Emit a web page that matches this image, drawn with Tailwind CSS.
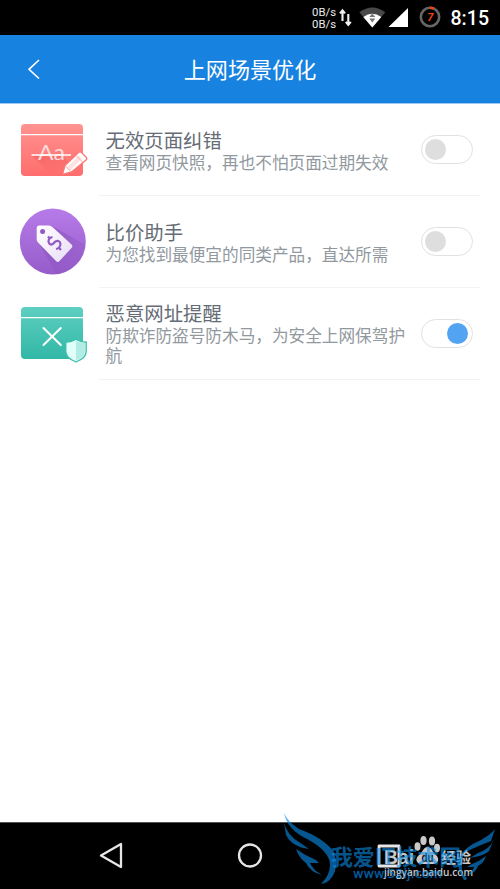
<!DOCTYPE html>
<html lang="zh-CN">
<head>
<meta charset="utf-8">
<title>上网场景优化</title>
<script src="https://cdn.jsdelivr.net/npm/@tailwindcss/browser@4"></script>
</head>
<body class="w-[500px] h-[889px] overflow-hidden bg-white font-['Noto_Sans_CJK_SC',sans-serif]">
<div class="relative flex flex-col w-[500px] h-[889px]">
  <!-- status bar -->
  <div class="h-[35px] shrink-0 bg-black">
    <svg class="block" width="500" height="35" viewBox="0 0 500 35" font-family="Roboto, sans-serif">
      <g fill="#ececec" font-size="11.5">
        <text x="312" y="15.5" textLength="24" lengthAdjust="spacingAndGlyphs">0B/s</text>
        <text x="312" y="28" textLength="24" lengthAdjust="spacingAndGlyphs">0B/s</text>
      </g>
      <path d="M342.500 21V11M340 13.400l2.500-3 2.500 3M348.300 14v10M345.800 21.800l2.500 3 2.500-3" fill="none" stroke="#f2f2f2" stroke-width="2.100"/>
      <path d="M359.300 12.300Q372.300 2.500 385.300 12.300L372.300 27.500Z" fill="#484848"/>
      <path d="M363.300 17Q372.300 10.500 381.300 17L372.300 27.500Z" fill="#fff"/>
      <path d="M372.300 13.500l3 3.500h-6zM372.300 22.500l3-4h-6z" fill="#777"/>
      <path d="M408 8v19H388.500z" fill="#fff"/>
      <circle cx="430" cy="17" r="9.200" fill="none" stroke="#666" stroke-width="2.600"/>
      <path d="M430 7.800a9.200 9.200 0 0 1 4 .9" fill="none" stroke="#f4420c" stroke-width="2.600"/>
      <text x="430.200" y="21" text-anchor="middle" font-size="11" font-weight="700" font-style="italic" fill="#f4420c">7</text>
      <text x="450.500" y="25" font-size="19.500" font-weight="500" fill="#fff" textLength="38.500" lengthAdjust="spacingAndGlyphs">8:15</text>
    </svg>
  </div>
  <!-- title bar -->
  <header class="relative h-[69px] shrink-0 bg-[#1782df] border-b border-[#9dcaf2] flex items-center justify-center text-white">
    <svg class="absolute left-[27px] top-[24px]" width="14" height="20" viewBox="0 0 14 20" fill="none" stroke="#fff" stroke-width="1.600"><path d="M12 1L2 10.300L12 19.500"/></svg>
    <h1 class="text-[22.100px] leading-[30px] pb-[3px]">上网场景优化</h1>
  </header>
  <!-- settings -->
  <main class="flex-1">
    <section class="flex h-[92px]">
      <svg class="w-[99px] h-[92px] shrink-0" viewBox="0 104 99 92">
        <defs>
          <linearGradient id="red" x2="0" y2="1"><stop stop-color="#ff9390"/><stop offset="1" stop-color="#ff6d6d"/></linearGradient>
          <linearGradient id="redShade" x1="0" y1="0" x2=".3" y2="1"><stop stop-color="#e95555" stop-opacity=".5"/><stop offset="1" stop-color="#ee5b5b" stop-opacity="0"/></linearGradient>
        </defs>
        <rect x="21" y="124" width="62" height="52" rx="4" fill="url(#red)"/>
        <path d="M32 155.500h31l10 12-9 8.500H53z" fill="url(#redShade)"/>
        <path d="M21 134.600h62" stroke="#fff" stroke-width="1.400"/>
        <text x="38" y="160" font-family="Lato, sans-serif" font-size="22" fill="#ffdad8" textLength="27" lengthAdjust="spacingAndGlyphs">Aa</text>
        <path d="M31.500 155H71" stroke="#fff" stroke-width="1.400"/>
        <path d="M62.500 174.300l2.500-8.800 13.500-13q1.500-1.500 3 0l4.500 4.500q1.500 1.500 0 3L71.500 172z" fill="#fff" stroke="#ff7575" stroke-width="1.300"/>
        <path d="M67 167.500l12-12 3 3-12 12z" fill="#ffe3e2"/>
        <path d="M65.500 166l5.500 6M76 155.500l6.500 6.500" stroke="#ff9a98" stroke-width=".9"/>
      </svg>
      <div class="flex w-[381px] border-b border-[#f2f3f3]">
        <div class="flex flex-col w-[322px] pl-[6.500px] pt-[23px]">
          <h2 class="mb-[1px] text-[19.400px] leading-[25px] text-[#656c75]">无效页面纠错</h2>
          <p class="w-[302px] text-[16.650px] leading-[19.500px] text-[#91989e]">查看网页快照，再也不怕页面过期失效</p>
        </div>
        <div class="mt-[31px] h-[29px] w-[52px] shrink-0 rounded-full border border-[#e1e1e1] flex items-center pl-[3px]"><span class="size-[21px] rounded-full bg-[#dedede]"></span></div>
      </div>
    </section>
    <section class="flex h-[92px]">
      <svg class="w-[99px] h-[92px] shrink-0" viewBox="0 196 99 92">
        <defs>
          <linearGradient id="purple" x2="0" y2="1"><stop stop-color="#b67be9"/><stop offset="1" stop-color="#965cc9"/></linearGradient>
          <linearGradient id="purpleShade" x2=".7" y2="1"><stop stop-color="#7641a8" stop-opacity=".55"/><stop offset="1" stop-color="#8750bb" stop-opacity="0.050"/></linearGradient>
          <linearGradient id="tag" x2="1" y2="1"><stop stop-color="#fff"/><stop offset="1" stop-color="#e9dcf7"/></linearGradient>
          <clipPath id="disc"><circle cx="52.800" cy="241.500" r="33"/></clipPath>
        </defs>
        <circle cx="52.800" cy="241.500" r="33" fill="url(#purple)"/>
        <path clip-path="url(#disc)" d="M51 225.500L88 246V280H60L37 240z" fill="url(#purpleShade)"/>
        <path d="M39 225.500H49q2 0 3.500 1.500L71.500 244.500q1.800 1.800 0 3.500L59.500 261q-1.800 1.800-3.500 0L38 242.500q-1.300-1.400-1.300-3.300V228q0-2.500 2.300-2.500z" fill="url(#tag)"/>
        <circle cx="42.600" cy="231.600" r="2.500" fill="#9159c5"/>
        <path d="M52.500 237Q48.500 238 48.500 241.500 49.500 246 53 243.800L55.500 241.500Q59.500 239.500 60.500 244 60 248.500 56 249M48 236.500l2.500 2.800M58.500 247.200l2.500 2.800" fill="none" stroke="#9159c5" stroke-width="2.200"/>
      </svg>
      <div class="flex w-[381px] border-b border-[#f2f3f3]">
        <div class="flex flex-col w-[322px] pl-[6.500px] pt-[23px]">
          <h2 class="mb-[1px] text-[19.400px] leading-[25px] text-[#656c75]">比价助手</h2>
          <p class="w-[302px] text-[16.650px] leading-[19.500px] text-[#91989e]">为您找到最便宜的同类产品，直达所需</p>
        </div>
        <div class="mt-[31px] h-[29px] w-[52px] shrink-0 rounded-full border border-[#e1e1e1] flex items-center pl-[3px]"><span class="size-[21px] rounded-full bg-[#dedede]"></span></div>
      </div>
    </section>
    <section class="flex h-[92px]">
      <svg class="w-[99px] h-[92px] shrink-0" viewBox="0 288 99 92">
        <defs><linearGradient id="green" x2="0" y2="1"><stop stop-color="#5dcfc0"/><stop offset="1" stop-color="#32b7a6"/></linearGradient></defs>
        <rect x="21" y="307" width="62" height="52" rx="4" fill="url(#green)"/>
        <path d="M21 317.600h62" stroke="#fff" stroke-width="1.400"/>
        <path d="M43.500 328l17.300 17M60.800 328l-17.300 17" stroke="#fff" stroke-width="2" stroke-linecap="round"/>
        <path d="M76 339.300Q71 342.500 65.800 342v9.500q0 6.500 10.200 10.500 10.200-4 10.200-10.500V342Q81 342.500 76 339.300z" fill="#e0fffa" stroke="#3dbdac" stroke-width="1.300"/>
        <path d="M76 340.500q4.500 2.700 9 2.500v8.500q0 5.500-9 9z" fill="#b2ede5"/>
      </svg>
      <div class="flex w-[381px] border-b border-[#f2f3f3]">
        <div class="flex flex-col w-[322px] pl-[6.500px] pt-[12px]">
          <h2 class="mb-[1px] text-[19.400px] leading-[25px] text-[#656c75]">恶意网址提醒</h2>
          <p class="w-[302px] text-[16.650px] leading-[19.500px] text-[#91989e]">防欺诈防盗号防木马，为安全上网保驾护航</p>
        </div>
        <div class="mt-[31px] h-[29px] w-[52px] shrink-0 rounded-full border border-[#e1e1e1] flex items-center justify-end pr-[4px]"><span class="size-[21px] rounded-full bg-[#53a3f3]"></span></div>
      </div>
    </section>
  </main>
  <!-- navigation bar -->
  <nav class="h-[67px] shrink-0 bg-black border-t border-[#555] flex items-center justify-center">
    <svg class="block" width="500" height="66" viewBox="0 823 500 66" fill="none" stroke="#e6e6e6" stroke-width="2.300" stroke-linejoin="round">
      <path d="M101 855.500L121 844v23z"/>
      <circle cx="250" cy="855.500" r="11"/>
      <rect x="379" y="846" width="20" height="20" stroke-width="2.800"/>
    </svg>
  </nav>
  <!-- watermarks -->
  <svg class="absolute left-[270px] top-[800px]" width="230" height="89" viewBox="270 800 230 89">
    <g fill="#c9c9c9">
      <text x="384" y="864" font-family="Liberation Sans, sans-serif" font-weight="700" font-size="19.500" textLength="30" lengthAdjust="spacingAndGlyphs">Bai</text>
      <ellipse cx="417.500" cy="846.500" rx="3" ry="4.200"/>
      <ellipse cx="423.500" cy="840.500" rx="3.100" ry="4.500"/>
      <ellipse cx="432" cy="841" rx="3.100" ry="4.500"/>
      <ellipse cx="437" cy="848" rx="3" ry="4.200"/>
      <path d="M427.500 847q3 0 5 4 2 3 4.500 5 2.500 4 0 6.500-2 2-9.500 1.500-8 .5-10-1.500-2.500-3 .5-6.500 3-2.500 4.500-5 2-4 5-4z"/>
      <text x="441" y="862.500" font-family="Noto Sans CJK SC, sans-serif" font-weight="700" font-size="15">经验</text>
      <text x="384" y="875.500" font-family="Open Sans, sans-serif" font-weight="600" font-size="11.500" textLength="89" lengthAdjust="spacingAndGlyphs">jingyan.baidu.com</text>
    </g>
    <text x="427.500" y="861.500" text-anchor="middle" font-family="Liberation Sans, sans-serif" font-weight="700" font-size="12" fill="#111" textLength="12" lengthAdjust="spacingAndGlyphs">du</text>
    <g fill="#0a8de6" fill-opacity=".62">
      <path d="M284 813Q288 822 299 829 324 838 334 852 339 868 332 877 328 883 321 884 330 875 330 865 330 852 309 840 287 830 284 813z"/>
      <path d="M284 823Q288 836 299 842L309 849Q292 847 286 835z"/>
      <path d="M296 849Q306 856 316 860L319 863H310Q313 870 322 875 310 872 306 863 299 858 296 849z"/>
      <path d="M495 829Q490 835 481 840 464 847 459 858 456 868 464 880 470 880 463 874 460 863 464 853 473 848 491 841 495 829z"/>
      <path d="M494 839Q490 849 478 853L470 858Q484 856 489 851z"/>
      <path d="M486 856Q480 861 472 864L467 867H474Q473 871 467 875 476 873 478 866 484 863 486 856z"/>
      <text x="331" y="864.500" font-family="Noto Sans CJK SC, sans-serif" font-size="22" font-weight="700" textLength="130" lengthAdjust="spacingAndGlyphs">我爱IT技术网</text>
      <text x="353" y="877.500" font-family="DejaVu Sans, sans-serif" font-size="12.500" stroke="#0a8de6" stroke-opacity=".4" stroke-width=".5" textLength="89" lengthAdjust="spacingAndGlyphs">www.52ij.com</text>
    </g>
  </svg>
</div>
</body>
</html>
